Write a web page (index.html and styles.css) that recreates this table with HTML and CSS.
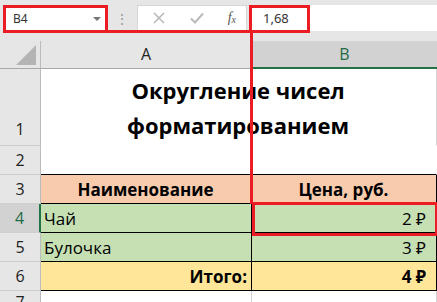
FILE: index.html
```html
<!DOCTYPE html>
<html>
<head>
<meta charset="utf-8">
<link rel="stylesheet" href="styles.css">
</head>
<body>
<div class="app">
  <div class="toolbar">
    <div class="namebox"><span class="ref">B4</span><span class="caret"></span></div>
    <div class="sep">⋮</div>
    <div class="fbtns">
      <svg class="ic" width="14" height="14" viewBox="0 0 14 14"><path d="M2 2L12 12M12 2L2 12" stroke="#b9b9b9" stroke-width="1.6" fill="none"/></svg>
      <svg class="ic" width="16" height="14" viewBox="0 0 16 14"><path d="M2 7.5L6 11.5L14 2.5" stroke="#b9b9b9" stroke-width="2" fill="none"/></svg>
      <span class="fx">f<sub>x</sub></span>
    </div>
    <div class="formula">1,68</div>
  </div>
  <div class="sheet">
    <div class="corner"><span class="tri"></span></div>
    <div class="colh">A</div>
    <div class="colh sel">B</div>

    <div class="rowh r1">1</div>
    <div class="cell title">Округление чисел<br>форматированием</div>

    <div class="rowh">2</div>
    <div class="cell tb"></div>
    <div class="cell tb"></div>

    <div class="rowh">3</div>
    <div class="cell hd">Наименование</div>
    <div class="cell hd">Цена, руб.</div>

    <div class="rowh sel">4</div>
    <div class="cell gr">Чай</div>
    <div class="cell gr num cur">2 ₽</div>

    <div class="rowh">5</div>
    <div class="cell gr">Булочка</div>
    <div class="cell gr num cur">3 ₽</div>

    <div class="rowh">6</div>
    <div class="cell yl num b">Итого:</div>
    <div class="cell yl num b cur">4 ₽</div>

    <div class="rowh r7">7</div>
    <div class="cell"></div>
    <div class="cell"></div>
  </div>

  <div class="mark m-name"></div>
  <div class="mark m-link"></div>
  <div class="mark m-formula"></div>
  <div class="mark m-down"></div>
  <div class="mark m-cell"></div>
</div>
</body>
</html>
```
FILE: styles.css
```css
* { box-sizing: border-box; }
html, body { margin: 0; padding: 0; }
body { width: 437px; height: 302px; overflow: hidden; background: #fff; }
.app { position: relative; width: 437px; height: 302px; overflow: hidden; font-family: "Open Sans", "Noto Sans", sans-serif; }

.toolbar { height: 41px; background: #e6e6e6; display: flex; align-items: flex-start; padding-top: 5px; }
.namebox { width: 103px; height: 27px; margin-left: 4px; background: #fff; display: flex; align-items: center; justify-content: space-between; padding: 0 6px 0 9px; font-family: "Noto Sans", sans-serif; font-size: 12px; color: #333; }
.caret { width: 0; height: 0; border-left: 4px solid transparent; border-right: 4px solid transparent; border-top: 4px solid #777; }
.sep { width: 30px; text-align: center; color: #9a9a9a; font-size: 14px; line-height: 27px; }
.fbtns { width: 110px; height: 26px; background: #fff; border: 1px solid #d6d6d6; display: flex; align-items: center; justify-content: space-between; padding: 0 10px 0 14px; }
.fx { font-family: "Liberation Serif", serif; font-style: italic; font-size: 14px; color: #555; }
.fx sub { font-size: 10px; vertical-align: -1px; }
.formula { flex: 1; height: 26px; margin-left: 3px; background: #fff; font-family: "Noto Sans", sans-serif; font-size: 13px; color: #333; padding-left: 13px; line-height: 26px; }

.sheet { display: grid; grid-template-columns: 41px 211px 185px; grid-template-rows: 28px 77px 29px 29px 29px 29px 29px 20px; }
.corner { background: #e6e6e6; border-right: 1px solid #bcbcbc; border-bottom: 1px solid #a9a9a9; position: relative; }
.tri { position: absolute; right: 4px; bottom: 3px; width: 0; height: 0; border-left: 20px solid transparent; border-bottom: 20px solid #b4b4b4; }
.colh { background: #e6e6e6; border-right: 1px solid #c8c8c8; border-bottom: 1px solid #a9a9a9; text-align: center; font-size: 16px; line-height: 27px; color: #222; }
.colh.sel { background: #d2d2d2; color: #1e6b45; border-bottom: 2px solid #217346; border-right: none; }
.rowh { background: #e6e6e6; border-right: 1px solid #bcbcbc; border-bottom: 1px solid #cfcfcf; text-align: center; font-size: 16px; color: #222; display: flex; align-items: flex-end; justify-content: center; padding-bottom: 3px; }
.rowh.r1 { padding-bottom: 5px; }
.rowh.r7 { align-items: flex-start; padding-top: 3px; line-height: 17px; }
.rowh.sel { background: #d2d2d2; color: #1e6b45; border-right: 2px solid #217346; }

.cell { border-right: 1px solid #d4d4d4; border-bottom: 1px solid #d4d4d4; font-size: 17px; color: #000; display: flex; align-items: flex-end; padding: 0 4px 2px 3px; white-space: nowrap; }
.title { grid-column: span 2; justify-content: center; text-align: center; font-weight: 700; font-size: 22px; line-height: 35px; padding-bottom: 2px; border-bottom-color: transparent; }
.cell.tb { border-bottom: 1px solid #000; border-right-color: transparent; }
.hd { background: #f8cbad; font-weight: 700; justify-content: center; border-right: 1px solid #000; border-bottom: 1px solid #000; }
.gr { background: #c6e0b4; border-right: 1px solid #000; border-bottom: 1px solid #000; }
.yl { background: #ffe699; border-right: 1px solid #000; border-bottom: 1px solid #000; }
.num { justify-content: flex-end; }
.cur { padding-right: 10px; }
.b { font-weight: 700; }

.mark { position: absolute; border: 3px solid #ec1c24; }
.m-name { left: 3px; top: 5px; width: 105px; height: 28px; }
.m-link { left: 107px; top: 30px; width: 145px; height: 3px; border: none; background: #ec1c24; }
.m-formula { left: 249px; top: 5px; width: 61px; height: 28px; }
.m-down { left: 250px; top: 32px; width: 3px; height: 172px; border: none; background: #ec1c24; }
.m-cell { left: 252px; top: 202px; width: 186px; height: 34px; }
```
